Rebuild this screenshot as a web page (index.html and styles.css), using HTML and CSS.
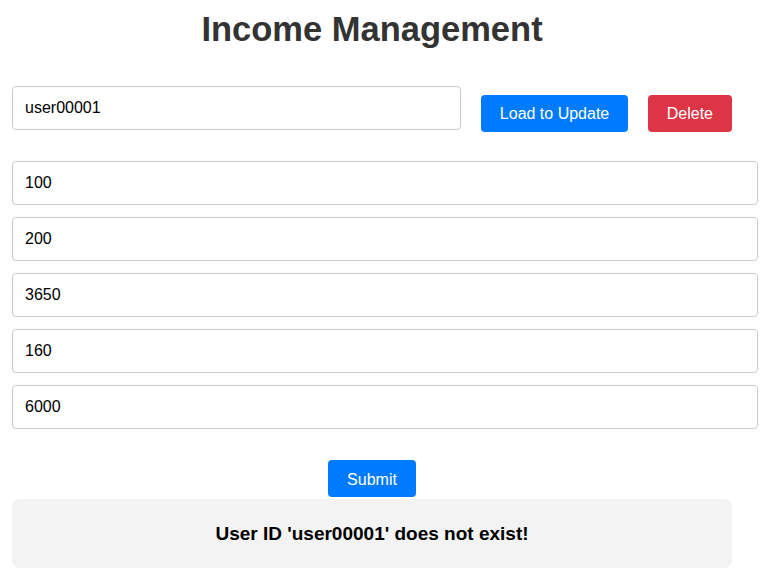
FILE: index.html
```html
<!DOCTYPE html>
<html>
<head>
<meta charset="utf-8">
<title>Income Management</title>
<link rel="stylesheet" href="styles.css">
</head>
<body>
<div class="page">
  <h1 class="title">Income Management</h1>
  <div class="id-row">
    <input class="field id-field" type="text" value="user00001">
    <button class="btn btn-blue">Load to Update</button>
    <button class="btn btn-red">Delete</button>
  </div>
  <form class="form">
    <input class="field" type="text" value="100">
    <input class="field" type="text" value="200">
    <input class="field" type="text" value="3650">
    <input class="field" type="text" value="160">
    <input class="field" type="text" value="6000">
  </form>
  <div class="submit-wrap">
    <button class="btn btn-blue">Submit</button>
  </div>
  <div class="message">
    <h3 class="message-text">User ID 'user00001' does not exist!</h3>
  </div>
</div>
</body>
</html>
```
FILE: styles.css
```css
html, body {
  margin: 0;
  padding: 0;
  background: #fff;
  font-family: "Liberation Sans", Arial, sans-serif;
}
.page {
  width: 720px;
  padding: 9px 0 0 12px;
}
.title {
  margin: 0 0 37px;
  text-align: center;
  font-size: 34.5px;
  font-weight: bold;
  color: #333;
  line-height: 40px;
}
.field {
  display: block;
  width: 100%;
  box-sizing: content-box;
  padding: 12px;
  border: 1px solid #ccc;
  border-radius: 4px;
  font-family: "Liberation Sans", Arial, sans-serif;
  font-size: 16px;
  line-height: 18px;
  color: #000;
  margin: 0;
  background: #fff;
}
.id-row {
  display: flex;
  align-items: center;
  gap: 19.5px;
}
.id-field {
  flex: 1;
  width: auto;
  min-width: 0;
  margin-bottom: 10px;
  height: 18px;
}
.btn {
  border: none;
  border-radius: 4px;
  padding: 2px 19px 0;
  height: 37px;
  font-family: "Liberation Sans", Arial, sans-serif;
  font-size: 16px;
  color: #fff;
  cursor: pointer;
}
.btn-blue { background: #007bff; }
.btn-red { background: #dc3545; }
.form {
  display: flex;
  flex-direction: column;
  gap: 12px;
  margin: 21px 0 0;
}
.submit-wrap {
  display: flex;
  justify-content: center;
  margin-top: 31px;
}
.message {
  margin-top: 2px;
  background: #f3f3f3;
  border-radius: 8px;
  height: 69px;
  display: flex;
  align-items: center;
  justify-content: center;
}
.message-text {
  margin: 0;
  font-size: 19px;
  font-weight: bold;
  color: #000;
}
```
